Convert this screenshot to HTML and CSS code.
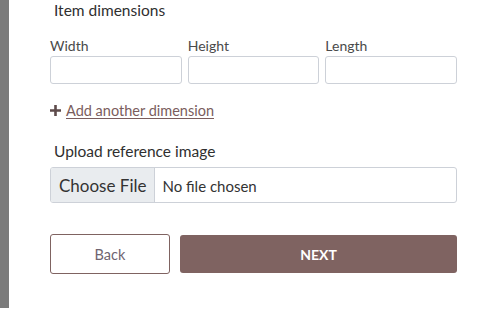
FILE: index.html
```html
<!DOCTYPE html>
<html lang="en">
<head>
    <meta charset="UTF-8">
    <meta name="viewport" content="width=device-width, initial-scale=1.0">
    <link rel="stylesheet" href="styles.css">
</head>
<body>
    <div class="page">
        <div class="side-bar"></div>
        <div class="form-wrapper">
            <form>
                <h3 class="section-title">Item dimensions</h3>
                <div class="dims-row">
                    <div class="form-group">
                        <label for="width">Width</label>
                        <input type="text" id="width" name="width">
                    </div>
                    <div class="form-group">
                        <label for="height">Height</label>
                        <input type="text" id="height" name="height">
                    </div>
                    <div class="form-group">
                        <label for="length">Length</label>
                        <input type="text" id="length" name="length">
                    </div>
                </div>

                <a href="#" class="add-link">
                    <svg class="plus" width="11" height="11" viewBox="0 0 11 11">
                        <path d="M5.5 0V11M0 5.5H11" stroke="#5e4b4b" stroke-width="2.6"/>
                    </svg>
                    <span class="add-text">Add another dimension</span>
                </a>

                <h3 class="section-title upload-title">Upload reference image</h3>
                <input type="file" class="file-input" name="reference">

                <div class="buttons">
                    <button type="button" class="btn-back">Back</button>
                    <button type="submit" class="btn-next">NEXT</button>
                </div>
            </form>
        </div>
    </div>
</body>
</html>
```

FILE: styles.css
```css
* {
    box-sizing: border-box;
}
body {
    margin: 0;
    font-family: Lato, "Open Sans", sans-serif;
    background-color: #ffffff;
    color: #333;
}
.page {
    display: flex;
    height: 308px;
}
.side-bar {
    width: 9px;
    background-color: #7b7b7b;
}
.form-wrapper {
    padding-left: 41px;
    width: 448px;
}
.section-title {
    margin: 0;
    padding-left: 4px;
    font-size: 15.5px;
    font-weight: normal;
    line-height: 20px;
    color: #2f2f2f;
}
.dims-row {
    display: flex;
    gap: 6px;
    margin-top: 17px;
}
.form-group {
    flex: 1;
}
label {
    display: block;
    font-size: 14px;
    line-height: 18px;
    color: #4a4a4a;
    margin-bottom: 1px;
}
input[type="text"] {
    width: 100%;
    height: 28px;
    border: 1px solid #cdd1d8;
    border-radius: 3px;
    font-size: 14px;
    padding: 4px 8px;
}
.add-link {
    display: flex;
    align-items: center;
    gap: 5px;
    margin-top: 16px;
    height: 20px;
    text-decoration: none;
    color: #7a5d5d;
    font-size: 14.5px;
}
.plus {
    flex-shrink: 0;
    margin-top: 1px;
}
.add-text {
    text-decoration: underline;
    text-underline-offset: 2px;
}
.upload-title {
    margin-top: 21px;
}
.file-input {
    display: block;
    width: 100%;
    height: 36px;
    margin-top: 6px;
    border: 1px solid #cdd1d8;
    border-radius: 3px;
    font-family: Lato, sans-serif;
    font-size: 15px;
    color: #333;
}
.file-input::file-selector-button {
    height: 34px;
    margin: 0 7px 0 0;
    padding: 0 8px;
    border: none;
    border-right: 1px solid #cdd1d8;
    background-color: #e9ecef;
    font-family: Lato, sans-serif;
    font-size: 17px;
    color: #333;
}
.buttons {
    display: flex;
    gap: 10px;
    margin-top: 31px;
    align-items: center;
}
.btn-back {
    width: 120px;
    height: 40px;
    background-color: white;
    border: 1px solid #7f6361;
    border-radius: 3px;
    color: #6f6470;
    font-family: Lato, sans-serif;
    font-size: 14.5px;
}
.btn-next {
    flex: 1;
    height: 38px;
    background-color: #7f6361;
    border: none;
    border-radius: 3px;
    color: white;
    font-family: Lato, sans-serif;
    font-weight: bold;
    font-size: 14px;
}
```
